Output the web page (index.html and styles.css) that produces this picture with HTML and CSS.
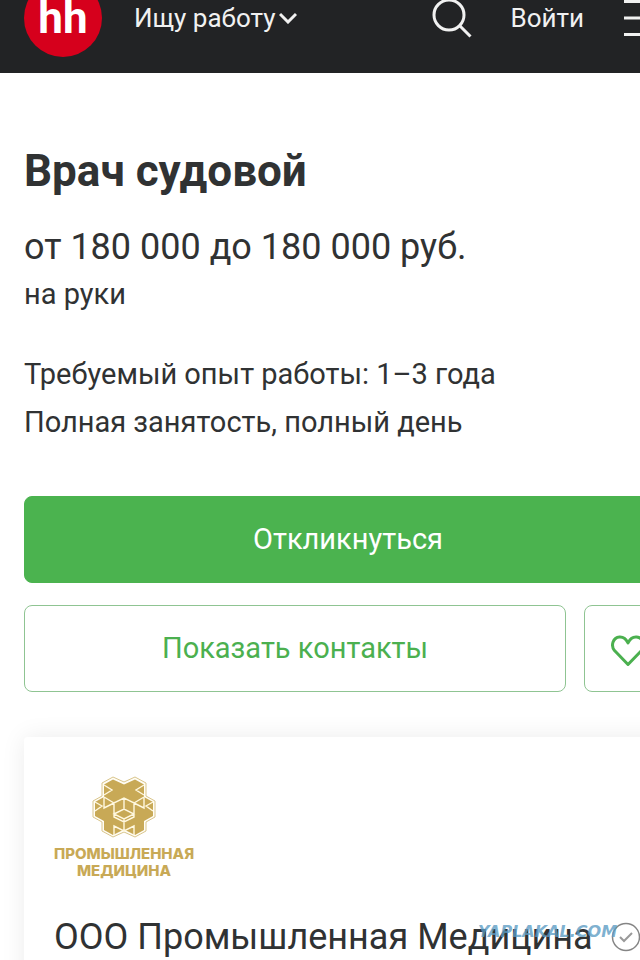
FILE: index.html
```html
<!DOCTYPE html>
<html lang="ru">
<head>
    <meta charset="UTF-8">
    <meta name="viewport" content="width=device-width, initial-scale=1.0">
    <title>Врач судовой</title>
    <link rel="stylesheet" href="styles.css">
</head>
<body>
    <div class="page">
        <header class="header">
            <a href="#" class="logo">hh</a>
            <button class="nav-button">
                Ищу работу
                <svg class="chevron" viewBox="0 0 18 12" fill="none">
                    <path d="M1 2L9 10L17 2" stroke="currentColor" stroke-width="3"/>
                </svg>
            </button>
            <button class="icon-button search-button" aria-label="Поиск">
                <svg class="search-icon" viewBox="0 0 40 40" fill="none">
                    <circle cx="17" cy="17" r="15" stroke="currentColor" stroke-width="3"/>
                    <path d="M27.5 27.5L38.5 38.5" stroke="currentColor" stroke-width="3"/>
                </svg>
            </button>
            <a href="#" class="login">Войти</a>
            <button class="icon-button" aria-label="Меню">
                <svg class="menu-icon" viewBox="0 0 48 36" fill="none">
                    <path d="M0 1.5H48M0 18H48M0 34.5H48" stroke="currentColor" stroke-width="3"/>
                </svg>
            </button>
        </header>

        <main class="content">
            <h1 class="title">Врач судовой</h1>
            <p class="salary">от 180 000 до 180 000 руб.</p>
            <p class="salary-note">на руки</p>

            <div class="conditions">
                <p>Требуемый опыт работы: 1–3 года</p>
                <p>Полная занятость, полный день</p>
            </div>

            <div class="actions">
                <button class="button button-primary">Откликнуться</button>
                <button class="button button-contacts">Показать контакты</button>
                <button class="button button-favorite" aria-label="В избранное">
                    <svg class="heart-icon" viewBox="0 0 34 32" fill="none">
                        <path d="M17 29.5L3.500 15.500C-0.500 10.500 2 2.500 8.500 2C12 1.800 15 3.500 17 8C19 3.500 22 1.800 25.500 2C32 2.500 34.500 10.500 30.500 15.500Z" stroke="currentColor" stroke-width="3" stroke-linejoin="round"/>
                    </svg>
                </button>
            </div>

            <section class="company">
                <div class="company-logo">
                    <svg class="company-mark" viewBox="0 0 64 62">
                        <path d="M21 1L32 6L43 1L54 7V20L63 25V41L54 46V55L43 61L32 56L21 61L10 55V46L1 41V25L10 20V7Z" fill="#fffdf5" stroke="#d9c58c" stroke-width="1"/>
                        <path d="M21 3.500L32 8.500L43 3.500L52 8.500V21L61 26V40L52 45V54L43 59L32 53.500L21 59L12 54V45L3 40V26L12 21V8.500Z" fill="#c8a956"/>
                        <path d="M12 9L20 14L12 19M52 9L44 14L52 19M12 21L22 27L32 22L42 27L52 21M12 21V32L22 27V41L32 46L42 41V27L52 32V21M22 38L32 33L42 38L32 43ZM32 22V33M3 26L10 30L3 35M61 26L54 30L61 35M32 43V54M22 59V50L32 55L42 50V59" fill="none" stroke="#fff8df" stroke-width="1.400"/>
                    </svg>
                    <span>ПРОМЫШЛЕННАЯ</span>
                    <span>МЕДИЦИНА</span>
                </div>
                <div class="company-name">
                    <span>ООО Промышленная Медицина</span>
                    <svg class="verified-icon" viewBox="0 0 30 30" fill="none">
                        <circle cx="15" cy="15" r="13.500" fill="#fff" stroke="#858585" stroke-width="1.500"/>
                        <path d="M9 15L13 19L21 11" stroke="#999" stroke-width="2"/>
                    </svg>
                    <span class="watermark">YAPLAKAL.COM</span>
                </div>
            </section>
        </main>
    </div>
</body>
</html>
```

FILE: styles.css
```css
* {
    box-sizing: border-box;
}
body {
    margin: 0;
    font-family: Roboto, "Liberation Sans", sans-serif;
    background-color: #fff;
    color: #303233;
    overflow: hidden;
}
h1, p {
    margin: 0;
}
a {
    text-decoration: none;
}
button {
    font-family: inherit;
    cursor: pointer;
}
.page {
    min-height: 100vh;
    overflow: hidden;
}
.header {
    display: flex;
    align-items: center;
    height: 73px;
    margin-right: -32px;
    padding: 0 32px 38px 24px;
    background-color: #222325;
    color: #fff;
    font-size: 26px;
    line-height: 32px;
    overflow: hidden;
}
.logo {
    display: flex;
    flex-shrink: 0;
    align-items: center;
    justify-content: center;
    width: 78px;
    height: 78px;
    margin-right: 32px;
    border-radius: 50%;
    background-color: #d6001c;
    color: #fff;
    font-size: 44px;
    font-weight: 700;
}
.nav-button {
    display: flex;
    align-items: center;
    gap: 4px;
    padding: 0;
    border: none;
    background: none;
    color: #f1f1f1;
    font-size: 26px;
    line-height: 32px;
    white-space: nowrap;
}
.chevron {
    width: 18px;
    height: 12px;
}
.icon-button {
    display: flex;
    flex-shrink: 0;
    padding: 0;
    border: none;
    background: none;
    color: #f1f1f1;
}
.search-button {
    margin-left: auto;
}
.search-icon {
    width: 40px;
    height: 40px;
}
.login {
    margin: 0 40px 0 38px;
    color: #f1f1f1;
}
.menu-icon {
    width: 48px;
    height: 36px;
}
.header .icon-button:last-child {
    margin-right: -32px;
}
.content {
    margin-right: -32px;
    padding: 72px 0 0 24px;
}
.title {
    font-size: 44px;
    line-height: 52px;
}
.salary {
    margin-top: 28px;
    font-size: 36px;
    line-height: 44px;
}
.salary-note {
    margin-top: 8px;
    font-size: 29px;
    line-height: 34px;
}
.conditions {
    margin-top: 39px;
    font-size: 29px;
    line-height: 48px;
}
.actions {
    display: grid;
    grid-template-columns: 1fr 88px;
    gap: 22px 18px;
    margin-top: 50px;
}
.button {
    display: flex;
    align-items: center;
    justify-content: center;
    height: 87px;
    padding: 0 0 2px;
    border: 1px solid #8fc492;
    border-radius: 8px;
    background-color: #fff;
    color: #4bb04f;
    font-size: 29px;
}
.button-primary {
    grid-column: 1 / -1;
    border-color: #4bb34f;
    background-color: #4bb34f;
    color: #fff;
}
.button-favorite {
    padding: 4px 0 0;
}
.heart-icon {
    width: 34px;
    height: 32px;
}
.company {
    min-height: 260px;
    margin-top: 45px;
    padding: 39px 30px 0;
    border-radius: 4px;
    box-shadow: 0 0 24px rgba(0, 0, 0, 0.08);
}
.company-logo {
    display: flex;
    flex-direction: column;
    align-items: center;
    width: 140px;
    color: #c8a956;
    font-family: Inter, "Liberation Sans", sans-serif;
    font-size: 15px;
    font-weight: 800;
    line-height: 17px;
}
.company-mark {
    width: 64px;
    height: 62px;
    margin-bottom: 7px;
}
.company-name {
    display: flex;
    align-items: center;
    gap: 18px;
    position: relative;
    margin-top: 36px;
    font-size: 36px;
    line-height: 44px;
    white-space: nowrap;
}
.verified-icon {
    flex-shrink: 0;
    width: 30px;
    height: 30px;
}
.watermark {
    position: absolute;
    top: 8px;
    left: 424px;
    color: rgba(92, 156, 196, 0.8);
    font-family: "DejaVu Sans", sans-serif;
    font-size: 16px;
    font-style: italic;
    font-weight: 700;
    line-height: 18px;
}
```
